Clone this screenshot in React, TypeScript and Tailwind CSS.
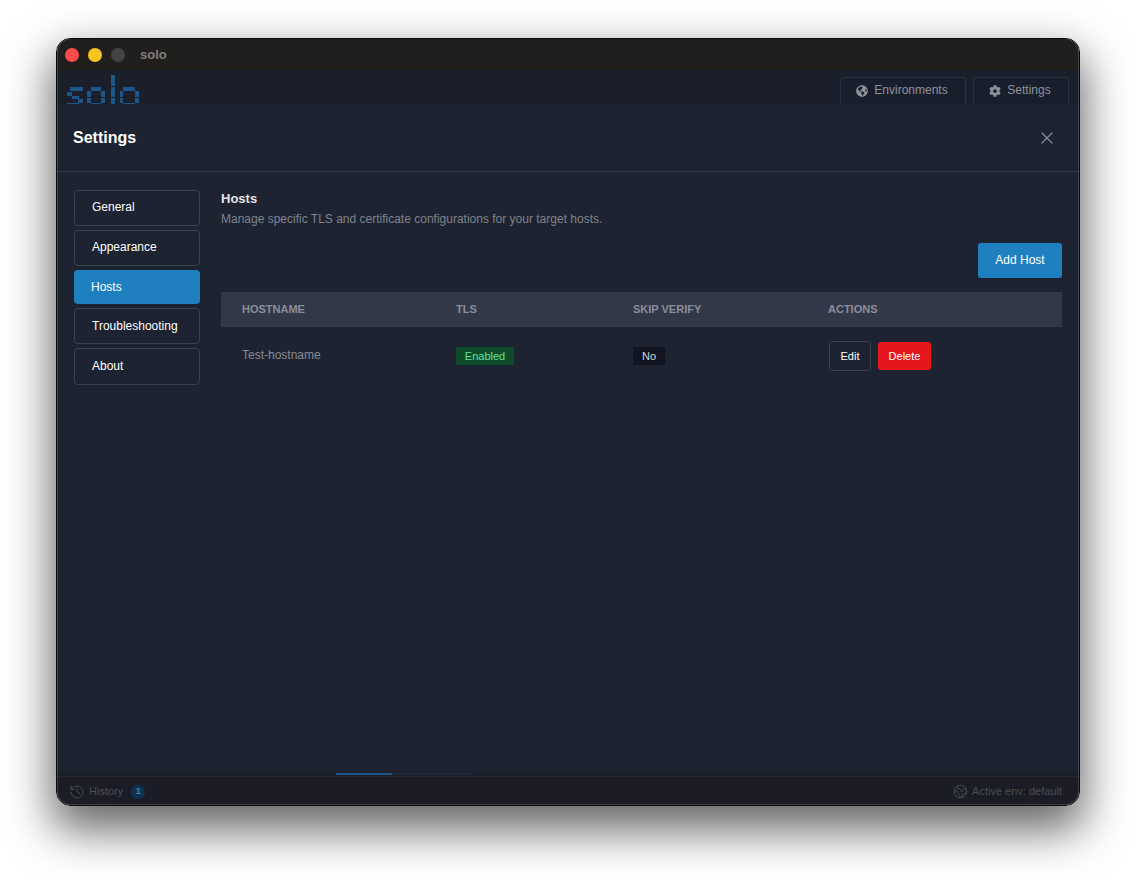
import { Earth, History, X } from 'lucide-react';
import { FaCog, FaGlobeAmericas } from 'react-icons/fa';

const sections = [
  { label: 'General', box: 'h-[36px] pb-[2px]' },
  { label: 'Appearance', box: 'h-[36px] pb-[2px]' },
  { label: 'Hosts', box: 'h-[34px]', active: true },
  { label: 'Troubleshooting', box: 'h-[36px]' },
  { label: 'About', box: 'h-[37px] pb-[2px]' },
];

// blocks of the pixel logo, [x, y, w, h] in px
const logo = [
  [3, 12, 13, 4], [0, 17, 5, 4], [5, 21, 7, 3], [11, 24, 5, 4], [0, 28, 12, 1],
  [20, 16, 4, 6], [20, 23, 4, 5], [24, 12, 10, 4], [34, 16, 4, 6], [34, 23, 4, 5], [24, 28, 10, 1],
  [44, 0, 4, 11], [44, 12, 4, 10], [44, 23, 4, 6],
  [53, 16, 3, 6], [53, 23, 3, 5], [56, 12, 12, 4], [68, 16, 4, 6], [68, 23, 4, 5], [56, 28, 12, 1],
];

function Logo() {
  return (
    <svg width="72" height="29" viewBox="0 0 72 29" className="absolute left-[10px] top-[5px]">
      {logo.map(([x, y, w, h]) => (
        <rect key={`${x}-${y}`} x={x} y={y} width={w} height={h} fill="#1c5687" />
      ))}
    </svg>
  );
}

function TopTab({ icon, label, className }: { icon: React.ReactNode; label: string; className: string }) {
  return (
    <div
      className={`flex h-[27px] items-center justify-center gap-[6px] rounded-t-[4px] border border-b-0 border-[#2a3140] bg-[#181e2b] pr-[2px] text-[12px] text-[#8f929c] ${className}`}
    >
      {icon}
      <span className="-mt-[2px]">{label}</span>
    </div>
  );
}

export default function App() {
  return (
    <div className="h-[880px] w-[1136px] overflow-hidden bg-white pl-[56px] pt-[38px] font-['Liberation_Sans',sans-serif]">
      <div className="relative flex h-[768px] w-[1024px] flex-col overflow-hidden rounded-[14px] border border-[#0c0c0c] shadow-[0_20px_45px_4px_rgba(0,0,0,0.6)]">
        <div className="flex h-[31px] shrink-0 items-center bg-[#201f1d] pl-[8px]">
          <span className="h-[14px] w-[14px] rounded-full bg-[#fe4b4b]" />
          <span className="ml-[9px] h-[14px] w-[14px] rounded-full bg-[#f9c322]" />
          <span className="ml-[9px] h-[14px] w-[14px] rounded-full bg-[#434343]" />
          <span className="ml-[15px] text-[13px] font-bold text-[#807f7d]">solo</span>
        </div>

        <div className="relative flex h-[34px] shrink-0 items-end justify-end gap-[7px] bg-[#1a1f2b] pr-[10px]">
          <Logo />
          <TopTab icon={<FaGlobeAmericas size={12} />} label="Environments" className="w-[126px]" />
          <TopTab icon={<FaCog size={12} />} label="Settings" className="w-[96px]" />
        </div>

        <div className="flex min-h-0 flex-1 flex-col bg-[#1d2331]">
          <div className="flex h-[68px] shrink-0 items-center justify-between border-b border-[#2f3645] pl-[16px] pr-[22px]">
            <h1 className="text-[16px] font-bold text-white">Settings</h1>
            <X size={20} strokeWidth={1.5} className="text-[#858a94]" />
          </div>

          <div className="flex flex-1 pl-[17px] pr-[17px] pt-[18px]">
            <nav className="flex w-[126px] shrink-0 flex-col gap-[4px]">
              {sections.map((s) =>
                s.active ? (
                  <div key={s.label} className={`flex items-center rounded-[4px] bg-[#1f80bf] pl-[17px] text-[12px] text-white ${s.box}`}>
                    {s.label}
                  </div>
                ) : (
                  <div key={s.label} className={`flex items-center rounded-[4px] border border-[#39404e] pl-[17px] text-[12px] text-white ${s.box}`}>
                    {s.label}
                  </div>
                ),
              )}
            </nav>

            <main className="ml-[21px] flex-1">
              <h2 className="text-[13px] font-bold leading-[18px] text-[#e4e5e8]">Hosts</h2>
              <p className="mt-[4px] text-[12px] leading-[15px] text-[#7e838d]">
                Manage specific TLS and certificate configurations for your target hosts.
              </p>
              <div className="mt-[16px] flex justify-end">
                <button className="h-[35px] w-[84px] rounded-[3px] bg-[#1f80bf] pb-[2px] text-[12px] text-white">Add Host</button>
              </div>
              <div className="mt-[14px] grid h-[35px] grid-cols-[214px_177px_195px_1fr] items-center bg-[#323848] pl-[21px] text-[11px] font-bold text-[#8a8e9b]">
                <span>HOSTNAME</span>
                <span>TLS</span>
                <span>SKIP VERIFY</span>
                <span>ACTIONS</span>
              </div>
              <div className="grid h-[58px] grid-cols-[214px_177px_195px_1fr] items-center pl-[21px]">
                <span className="-mt-[3px] text-[12px] text-[#878b96]">Test-hostname</span>
                <span className="flex">
                  <span className="flex h-[18px] w-[58px] items-center justify-center bg-[#0f4b2a] text-[11px] text-[#5ee49a]">Enabled</span>
                </span>
                <span className="flex">
                  <span className="flex h-[18px] w-[32px] items-center justify-center rounded-[2px] bg-[#121521] text-[11px] text-[#d5d7dc]">No</span>
                </span>
                <span className="ml-[1px] flex items-center gap-[7px]">
                  <button className="h-[30px] w-[42px] rounded-[3px] border border-[#3b4250] text-[11px] text-white">Edit</button>
                  <button className="h-[28px] w-[53px] rounded-[3px] bg-[#e5161d] text-[11px] text-white">Delete</button>
                </span>
              </div>
            </main>
          </div>

          <div className="h-[5px] shrink-0 bg-[#1a1f2b] pl-[279px]">
            <div className="flex h-[5px] items-start pt-[2px]">
              <div className="h-[2px] w-[56px] bg-[#1c5687]" />
              <div className="h-[2px] w-[80px] bg-[#22283a]" />
            </div>
          </div>
        </div>

        <div className="flex h-[29px] shrink-0 items-center justify-between border-t border-[#25262e] bg-[#1b1c25] pl-[12px] pr-[17px] pt-[1px] text-[11px] text-[#4a4c55]">
          <div className="flex items-center">
            <History size={16} strokeWidth={1.5} />
            <span className="ml-[4px]">History</span>
            <span className="ml-[8px] flex h-[14px] w-[14px] items-center justify-center rounded-full bg-[#0f3452] text-[9px] font-bold text-[#4f7fa3]">1</span>
          </div>
          <div className="flex items-center">
            <Earth size={15} strokeWidth={1.5} />
            <span className="ml-[4px]">Active env: default</span>
          </div>
        </div>

        {/* window edge highlight */}
        <div className="pointer-events-none absolute inset-0 rounded-[13px] border border-white/15 border-t-transparent" />
      </div>
    </div>
  );
}
